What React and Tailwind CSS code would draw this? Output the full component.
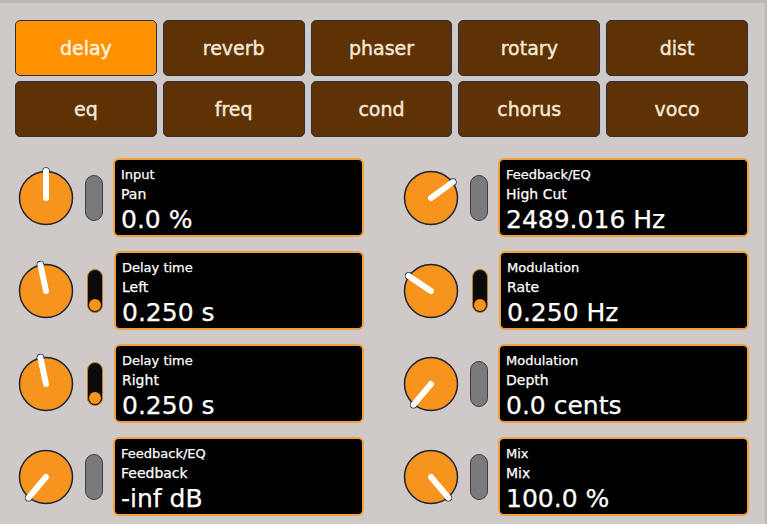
const tabs = [
  ["delay", "reverb", "phaser", "rotary", "dist"],
  ["eq", "freq", "cond", "chorus", "voco"],
];

const left = [
  { group: "Input", name: "Pan", value: "0.0 %", angle: 0, sw: "grey" },
  { group: "Delay time", name: "Left", value: "0.250 s", angle: -12, sw: "on" },
  { group: "Delay time", name: "Right", value: "0.250 s", angle: -12, sw: "on" },
  { group: "Feedback/EQ", name: "Feedback", value: "-inf dB", angle: -140, sw: "grey" },
];

const right = [
  { group: "Feedback/EQ", name: "High Cut", value: "2489.016 Hz", angle: 54, sw: "grey" },
  { group: "Modulation", name: "Rate", value: "0.250 Hz", angle: -56, sw: "on" },
  { group: "Modulation", name: "Depth", value: "0.0 cents", angle: -140, sw: "grey" },
  { group: "Mix", name: "Mix", value: "100.0 %", angle: 140, sw: "grey" },
];

function Knob({ angle }) {
  const r = 27;
  const a = (angle * Math.PI) / 180;
  const tx = 28 + r * Math.sin(a);
  const ty = 28 - r * Math.cos(a);
  return (
    <svg width="56" height="56" viewBox="0 0 56 56" className="shrink-0 overflow-visible">
      <circle cx="28" cy="28" r="26.5" fill="#f7941d" stroke="#1f2233" strokeWidth="1.5" />
      <circle cx={tx} cy={ty} r="3.8" fill="#2a2e44" />
      <line x1="28" y1="28" x2={tx} y2={ty} stroke="#ffffff" strokeWidth="6" strokeLinecap="round" />
    </svg>
  );
}

function Switch({ kind }) {
  if (kind === "on") {
    return (
      <div className="ml-[13px] mr-[11px] flex h-[44px] w-[16px] shrink-0 flex-col justify-end rounded-full border border-[#c97a1e] bg-[#0b0b0b] p-[1px]">
        <div className="h-[12px] w-[12px] rounded-full bg-[#f7941d]" />
      </div>
    );
  }
  return (
    <div className="ml-[11px] mr-[10px] h-[46px] w-[18px] shrink-0 rounded-full border-[1.5px] border-[#3a3e4c] bg-[#7a7a7c]" />
  );
}

function Control({ group, name, value, angle, sw }) {
  return (
    <div className="flex h-[79px] items-center">
      <Knob angle={angle} />
      <Switch kind={sw} />
      <div className="h-[79px] w-[251px] rounded-[6px] border-2 border-[#f2a03c] bg-black pl-[6px] pt-[5px] text-white [-webkit-text-stroke:0.25px_#ffffff]">
        <div className="text-[13px] leading-[19px]">{group}</div>
        <div className="text-[14px] leading-[21px]">{name}</div>
        <div className="text-[25px] leading-[30px]">{value}</div>
      </div>
    </div>
  );
}

export default function App() {
  return (
    <div className="h-[524px] w-[767px] overflow-hidden border-t-[3px] border-r-[2px] border-[#bbb7b5] bg-[#cfcac7] font-['DejaVu_Sans',sans-serif]">
      <div className="ml-[15px] mt-[17px] grid w-[733px] grid-cols-5 gap-x-[6px] gap-y-[5px]">
        {tabs.flat().map((t) => (
          <div
            key={t}
            className={
              t === "delay"
                ? "flex h-[56px] items-center justify-center rounded-[5px] border-[1.5px] border-[#2c3142] bg-[#ff9000] text-[19px] text-[#fff3e2] [-webkit-text-stroke:0.4px_#fff3e2]"
                : "flex h-[56px] items-center justify-center rounded-[5px] border-[1.5px] border-[#2c3142] bg-[#5f3206] text-[19px] text-[#f6ead8] [-webkit-text-stroke:0.4px_#f6ead8]"
            }
          >
            {t}
          </div>
        ))}
      </div>
      <div className="ml-[18px] mt-[21px] grid grid-cols-[346px_346px] gap-x-[39px] gap-y-[14px]">
        {left.map((c, i) => [
          <Control key={"l" + i} {...c} />,
          <Control key={"r" + i} {...right[i]} />,
        ])}
      </div>
    </div>
  );
}
